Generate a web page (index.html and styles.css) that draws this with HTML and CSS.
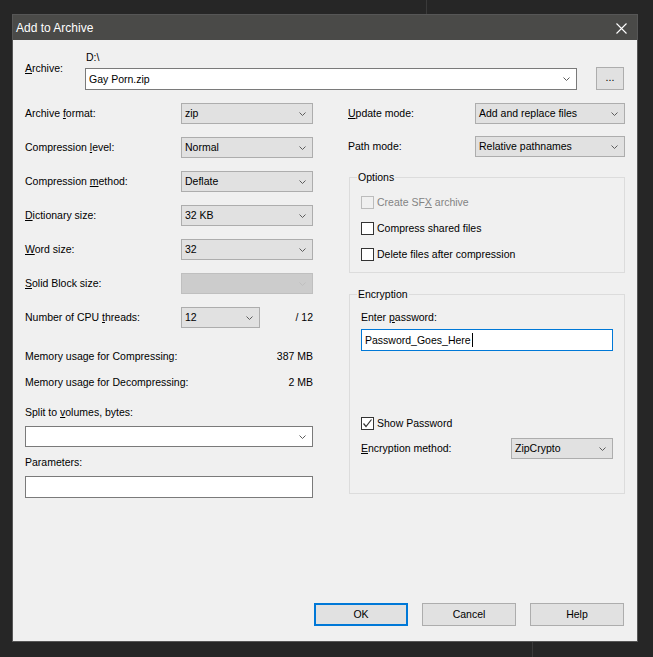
FILE: index.html
```html
<!DOCTYPE html>
<html>
<head>
<meta charset="utf-8">
<title>Add to Archive</title>
<link rel="stylesheet" href="styles.css">
</head>
<body>
<div class="desktop">
  <div class="deco deco-top"></div>
  <div class="deco deco-bottom"></div>
  <div class="window">
    <div class="titlebar">
      <span class="title">Add to Archive</span>
      <svg class="close" width="11" height="11" viewBox="0 0 11 11"><path d="M0.5 0.5 L10.5 10.5 M10.5 0.5 L0.5 10.5" stroke="#ffffff" stroke-width="1.1" fill="none"/></svg>
    </div>
    <div class="client">
      <div class="archive-row">
        <div class="archive-label"><u>A</u>rchive:</div>
        <div class="archive-mid">
          <div class="path">D:\</div>
          <div class="combo edit wide"><span>Gay Porn.zip</span><svg class="chev" width="7" height="4" viewBox="0 0 7 4"><polyline points="0.5,0.5 3.5,3.5 6.5,0.5"/></svg></div>
        </div>
        <div class="btn browse">...</div>
      </div>

      <div class="main">
        <div class="col-left">
          <div class="row"><span class="lbl">Archive <u>f</u>ormat:</span><div class="combo"><span>zip</span><svg class="chev" width="7" height="4" viewBox="0 0 7 4"><polyline points="0.5,0.5 3.5,3.5 6.5,0.5"/></svg></div></div>
          <div class="row"><span class="lbl">Compression <u>l</u>evel:</span><div class="combo"><span>Normal</span><svg class="chev" width="7" height="4" viewBox="0 0 7 4"><polyline points="0.5,0.5 3.5,3.5 6.5,0.5"/></svg></div></div>
          <div class="row"><span class="lbl">Compression <u>m</u>ethod:</span><div class="combo"><span>Deflate</span><svg class="chev" width="7" height="4" viewBox="0 0 7 4"><polyline points="0.5,0.5 3.5,3.5 6.5,0.5"/></svg></div></div>
          <div class="row"><span class="lbl"><u>D</u>ictionary size:</span><div class="combo"><span>32 KB</span><svg class="chev" width="7" height="4" viewBox="0 0 7 4"><polyline points="0.5,0.5 3.5,3.5 6.5,0.5"/></svg></div></div>
          <div class="row"><span class="lbl"><u>W</u>ord size:</span><div class="combo"><span>32</span><svg class="chev" width="7" height="4" viewBox="0 0 7 4"><polyline points="0.5,0.5 3.5,3.5 6.5,0.5"/></svg></div></div>
          <div class="row"><span class="lbl"><u>S</u>olid Block size:</span><div class="combo disabled"><span></span><svg class="chev" width="7" height="4" viewBox="0 0 7 4"><polyline points="0.5,0.5 3.5,3.5 6.5,0.5"/></svg></div></div>
          <div class="row"><span class="lbl">Number of CPU <u>t</u>hreads:</span><div class="combo short"><span>12</span><svg class="chev" width="7" height="4" viewBox="0 0 7 4"><polyline points="0.5,0.5 3.5,3.5 6.5,0.5"/></svg></div><span class="of">/ 12</span></div>

          <div class="mem"><span>Memory usage for Compressing:</span><span>387 MB</span></div>
          <div class="mem"><span>Memory usage for Decompressing:</span><span>2 MB</span></div>

          <div class="field-label split-label">Split to <u>v</u>olumes, bytes:</div>
          <div class="combo edit full"><span></span><svg class="chev" width="7" height="4" viewBox="0 0 7 4"><polyline points="0.5,0.5 3.5,3.5 6.5,0.5"/></svg></div>
          <div class="field-label param-label">Parameters:</div>
          <div class="textbox full"></div>
        </div>

        <div class="col-right">
          <div class="row r-update"><span class="lbl-r"><u>U</u>pdate mode:</span><div class="combo rwide"><span>Add and replace files</span><svg class="chev" width="7" height="4" viewBox="0 0 7 4"><polyline points="0.5,0.5 3.5,3.5 6.5,0.5"/></svg></div></div>
          <div class="row r-path"><span class="lbl-r">Path mode:</span><div class="combo rwide"><span>Relative pathnames</span><svg class="chev" width="7" height="4" viewBox="0 0 7 4"><polyline points="0.5,0.5 3.5,3.5 6.5,0.5"/></svg></div></div>

          <div class="group options">
            <span class="group-title">Options</span>
            <div class="check-row dis"><span class="box"></span><span>Create SF<u>X</u> archive</span></div>
            <div class="check-row"><span class="box"></span><span>Compress shared files</span></div>
            <div class="check-row"><span class="box"></span><span>Delete files after compression</span></div>
          </div>

          <div class="group encryption">
            <span class="group-title">Encryption</span>
            <div class="field-label">Enter <u>p</u>assword:</div>
            <div class="textbox pass"><span>Password_Goes_Here</span><span class="caret"></span></div>
            <div class="check-row show"><span class="box checked"><svg width="11" height="11" viewBox="0 0 11 11"><polyline points="1.5,5.5 4,8.5 9.5,1.5" fill="none" stroke="#333333" stroke-width="1.2"/></svg></span><span>Show Password</span></div>
            <div class="row method"><span class="lbl-m"><u>E</u>ncryption method:</span><div class="combo mcombo"><span>ZipCrypto</span><svg class="chev" width="7" height="4" viewBox="0 0 7 4"><polyline points="0.5,0.5 3.5,3.5 6.5,0.5"/></svg></div></div>
          </div>
        </div>
      </div>

      <div class="buttons">
        <div class="btn default">OK</div>
        <div class="btn">Cancel</div>
        <div class="btn">Help</div>
      </div>
    </div>
  </div>
</div>
</body>
</html>
```

FILE: styles.css
```css
* { box-sizing: border-box; }

html, body {
  margin: 0;
  padding: 0;
  background: #262626;
}

body {
  width: 653px;
  height: 657px;
  overflow: hidden;
  font-family: "Liberation Sans", Arial, sans-serif;
  font-size: 10.5px;
  color: #000;
}

.desktop {
  position: relative;
  width: 653px;
  height: 657px;
  padding-top: 14px;
  padding-left: 12px;
}

.deco {
  position: absolute;
  width: 1px;
  background: #3a3a3a;
}
.deco-top { left: 426px; top: 0; height: 14px; }
.deco-bottom { left: 532px; top: 642px; height: 15px; }

.window {
  width: 626px;
  height: 628px;
  border: 1px solid #565656;
  background: #f0f0f0;
  display: flex;
  flex-direction: column;
}

.titlebar {
  height: 25px;
  background: #4a4a48;
  display: flex;
  align-items: center;
  justify-content: space-between;
  padding: 0 10px 0 3px;
  flex: none;
}
.title {
  color: #ffffff;
  font-size: 12px;
  line-height: 15px;
  padding-top: 1px;
}
.close { display: block; margin-top: 1px; }

.client {
  flex: 1;
  display: flex;
  flex-direction: column;
  padding: 0 12px 15px 12px;
  line-height: 15px;
}

u { text-decoration: underline; text-underline-offset: 1px; }

/* archive row */
.archive-row { display: flex; height: 50px; flex: none; }
.archive-label { width: 60px; padding-top: 21px; }
.archive-mid { width: 492px; padding-top: 10px; }
.path { padding-left: 1px; height: 15px; }
.archive-mid .combo { margin-top: 3px; }

/* combos */
.combo {
  position: relative;
  display: flex;
  align-items: center;
  width: 132px;
  height: 21px;
  background: #e1e1e1;
  border: 1px solid #adadad;
  padding-left: 3px;
  flex: none;
}
.combo .chev {
  position: absolute;
  right: 6px;
  top: 50%;
  margin-top: -2px;
}
.chev polyline { fill: none; stroke: #5c5c5c; stroke-width: 1; }
.combo.edit { background: #ffffff; border-color: #7a7a7a; }
.combo.wide { width: 492px; height: 22px; }
.combo.full { width: 288px; }
.combo.short { width: 79px; }
.combo.disabled { background: #cccccc; border-color: #bfbfbf; }
.combo.disabled .chev polyline { stroke: #bfbfbf; }
.combo.rwide { width: 150px; }
.combo.mcombo { width: 102px; }

.textbox {
  height: 22px;
  background: #ffffff;
  border: 1px solid #7a7a7a;
}
.textbox.full { width: 288px; }

/* buttons */
.btn {
  width: 94px;
  height: 23px;
  background: #e1e1e1;
  border: 1px solid #adadad;
  display: flex;
  align-items: center;
  justify-content: center;
  flex: none;
}
.btn.browse {
  width: 28px;
  height: 23px;
  margin-left: 19px;
  margin-top: 27px;
  padding-bottom: 2px;
}
.btn.default { border: 2px solid #0078d7; }

.buttons {
  margin-top: auto;
  display: flex;
  justify-content: flex-end;
  gap: 14px;
  padding-right: 1px;
}

/* main columns */
.main {
  display: flex;
  gap: 35px;
  margin-top: 13px;
}
.col-left { width: 288px; display: flex; flex-direction: column; }
.col-right { width: 277px; display: flex; flex-direction: column; }

.row {
  display: flex;
  align-items: center;
  height: 21px;
  margin-bottom: 13px;
}
.lbl { width: 156px; flex: none; }
.of { flex: 1; text-align: right; }

.mem {
  display: flex;
  justify-content: space-between;
  align-items: center;
  height: 26px;
}
.mem:first-of-type { margin-top: 2px; }
.col-left .row:nth-child(7) + .mem { margin-top: 2px; }

.field-label { height: 15px; }
.split-label { margin-top: 10px; margin-bottom: 6px; }
.param-label { margin-top: 8px; margin-bottom: 6px; }

/* right column */
.lbl-r { width: 127px; flex: none; }
.r-update { margin-bottom: 12px; }
.r-path { margin-bottom: 20px; }

.group {
  position: relative;
  border: 1px solid #dcdcdc;
  margin-left: 1px;
  width: 276px;
}
.group-title {
  position: absolute;
  top: -8px;
  left: 7px;
  background: #f0f0f0;
  padding: 0 1px;
  line-height: 15px;
}
.options {
  height: 96px;
  padding: 11px 0 0 11px;
  margin-bottom: 21px;
}
.encryption {
  height: 200px;
  padding: 15px 11px 0 11px;
}

.check-row {
  display: flex;
  align-items: center;
  gap: 3px;
  height: 26px;
}
.box {
  width: 13px;
  height: 13px;
  border: 1px solid #333333;
  background: #ffffff;
  flex: none;
  display: flex;
  align-items: center;
  justify-content: center;
}
.box svg { display: block; }
.check-row.dis { color: #838383; }
.check-row.dis .box { border-color: #bcbcbc; background: #f0f0f0; }

.textbox.pass {
  width: 252px;
  margin-top: 4px;
  border-color: #0078d7;
  display: flex;
  align-items: center;
  padding-left: 3px;
}
.caret {
  display: inline-block;
  width: 1px;
  height: 14px;
  background: #000;
  margin-left: 1px;
}
.check-row.show { height: 16px; margin-top: 64px; }
.row.method { margin-top: 7px; margin-bottom: 0; }
.lbl-m { width: 150px; flex: none; }
```
